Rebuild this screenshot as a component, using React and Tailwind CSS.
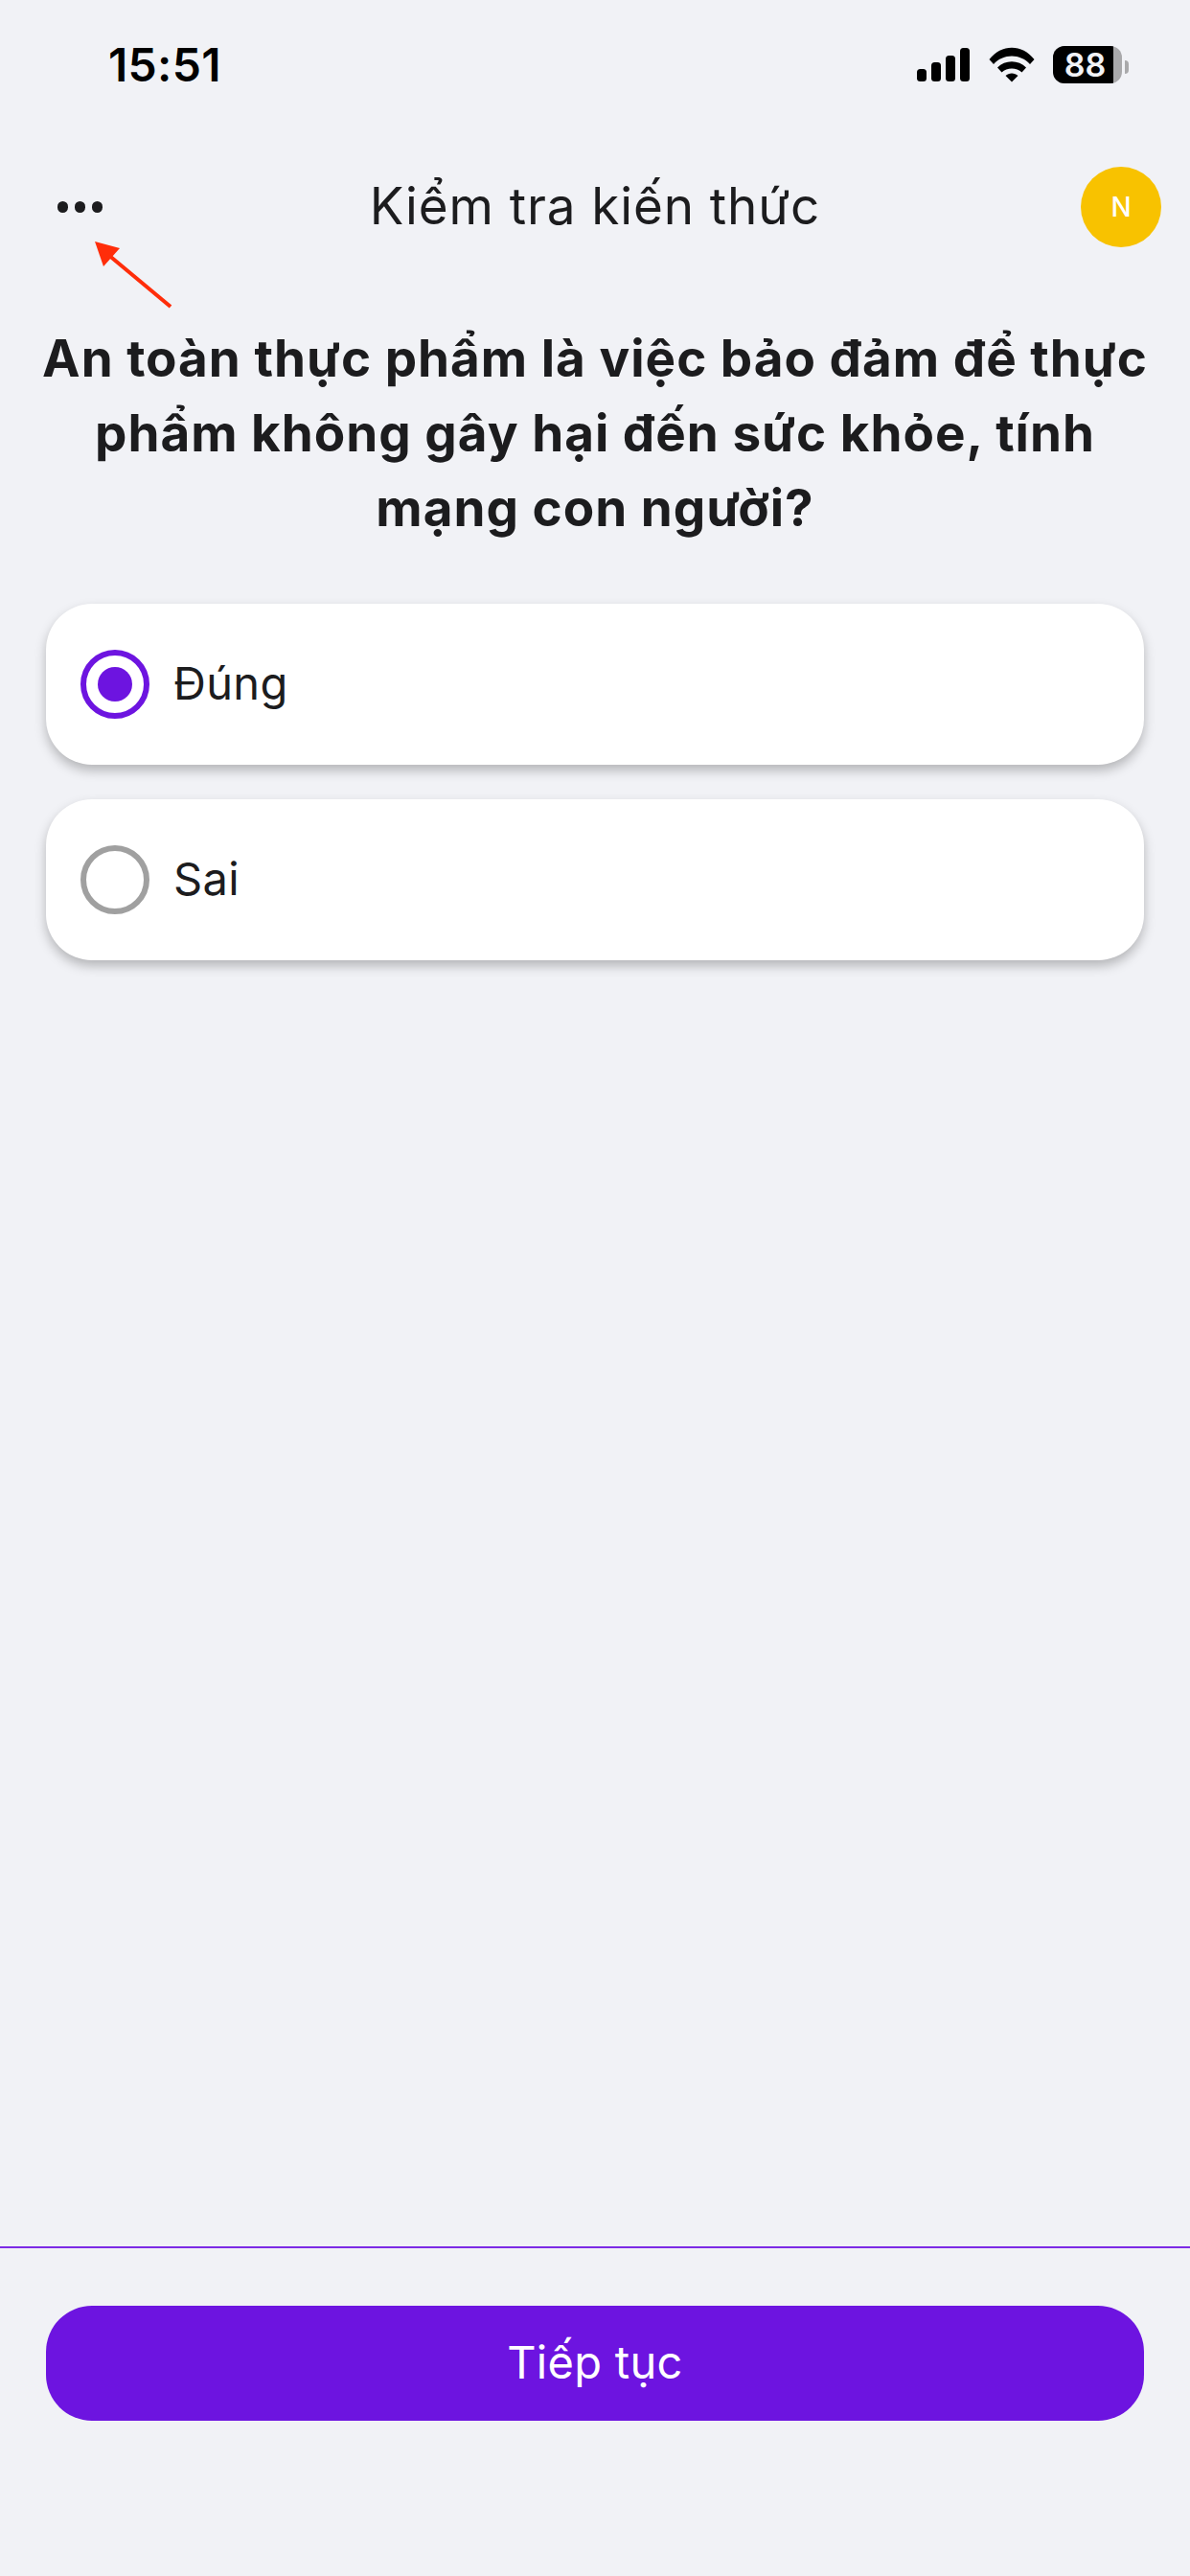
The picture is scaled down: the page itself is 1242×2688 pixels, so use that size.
import React from "react";

const INTER = "font-['Inter',sans-serif]";

function StatusBar() {
  return (
    <div className="flex h-[174px] items-start justify-between pt-[48px] pl-[113px] pr-[64px]">
      <span className="text-[48px] leading-[40px] font-semibold tracking-[0.3px] text-black">15:51</span>
      <div className="flex items-start">
        {/* signal */}
        <svg width="56" height="36" viewBox="0 0 56 36" className="mt-[2px]">
          <rect x="0" y="22" width="10" height="13" rx="3.5" fill="#000" />
          <rect x="15" y="15" width="10" height="20" rx="3.5" fill="#000" />
          <rect x="30" y="8" width="10" height="27" rx="3.5" fill="#000" />
          <rect x="45" y="0" width="10" height="35" rx="3.5" fill="#000" />
        </svg>
        {/* wifi */}
        <svg width="48" height="38" viewBox="0 0 48 38" className="ml-[19px] mt-[1px]">
          <path d="M0.5 13 C13 -3.5 35 -3.5 47.5 13 L43 18 C33 6.5 15 6.5 5 18 Z" fill="#000" />
          <path d="M9 21.5 C17 13 31 13 39 21.5 L34.5 26.5 C29 21 19 21 13.5 26.5 Z" fill="#000" />
          <path d="M17.5 30 C21 26.5 27 26.5 30.5 30 L24 36.5 Z" fill="#000" />
        </svg>
        {/* battery */}
        <div className="relative ml-[19px] flex h-[39px] w-[72px] items-center overflow-hidden rounded-[12px] bg-[#a9a9ab]">
          <div className="flex h-full w-[63px] items-center justify-center bg-black pl-[4px] text-[34px] leading-none font-semibold text-[#f1f2f6]">
            88
          </div>
        </div>
        <div className="mt-[15px] ml-[3px] h-[14px] w-[4px] rounded-r-full bg-[#a9a9ab]" />
      </div>
    </div>
  );
}

function Option({ label, selected }) {
  return (
    <div className="flex h-[168px] items-center gap-[25px] rounded-[48px] bg-white px-[36px] shadow-[0_6px_12px_rgba(0,0,0,0.25)]">
      <div
        className={`flex h-[72px] w-[72px] items-center justify-center rounded-full border-[6px] ${
          selected ? "border-[#6d14e0]" : "border-[#a0a0a0]"
        }`}
      >
        {selected && <div className="h-[36px] w-[36px] rounded-full bg-[#6d14e0]" />}
      </div>
      <span className="pb-[2px] text-[47px] tracking-[0.3px] text-[#1c1c1e]">{label}</span>
    </div>
  );
}

export default function App() {
  return (
    <div className={`${INTER} relative flex h-[2688px] flex-col bg-[#f1f2f6]`}>
      <StatusBar />

      {/* Header */}
      <div className="flex h-[84px] items-center justify-between pl-[60px] pr-[30px]">
        <div className="flex w-[54px] gap-[7px]">
          <div className="h-[12px] w-[11px] rounded-full bg-[#1c1c1e]" />
          <div className="h-[12px] w-[11px] rounded-full bg-[#1c1c1e]" />
          <div className="h-[12px] w-[11px] rounded-full bg-[#1c1c1e]" />
        </div>
        <h1 className="text-[53px] font-normal tracking-[0.9px] text-[#1c1c1e]">Kiểm tra kiến thức</h1>
        <div className="flex h-[84px] w-[84px] items-center justify-center rounded-full bg-[#f8c200] text-[28px] font-medium text-white">
          N
        </div>
      </div>

      {/* Annotation arrow */}
      <svg className="absolute left-[90px] top-[245px]" width="100" height="85" viewBox="0 0 100 85">
        <line x1="88" y1="75" x2="22" y2="20" stroke="#ff2d0a" strokeWidth="4" />
        <polygon points="9,7 35,14 18,33" fill="#ff2d0a" />
      </svg>

      {/* Question */}
      <p className="mt-[77px] px-[40px] text-center text-[53px] leading-[78px] font-bold tracking-[1px] text-[#1c1c1e]">
        An toàn thực phẩm là việc bảo đảm để thực phẩm không gây hại đến sức khỏe, tính mạng con người?
      </p>

      {/* Options */}
      <div className="mt-[61px] flex flex-col gap-[36px] px-[48px]">
        <Option label="Đúng" selected />
        <Option label="Sai" />
      </div>

      <div className="flex-1" />

      {/* Footer */}
      <div className="h-[344px] border-t-2 border-[#7c2be6] px-[48px] pt-[60px]">
        <button className="flex h-[120px] w-full items-center justify-center rounded-[48px] bg-[#6d14e0] pb-[2px] text-[47px] tracking-[0.3px] text-white">
          Tiếp tục
        </button>
      </div>
    </div>
  );
}
